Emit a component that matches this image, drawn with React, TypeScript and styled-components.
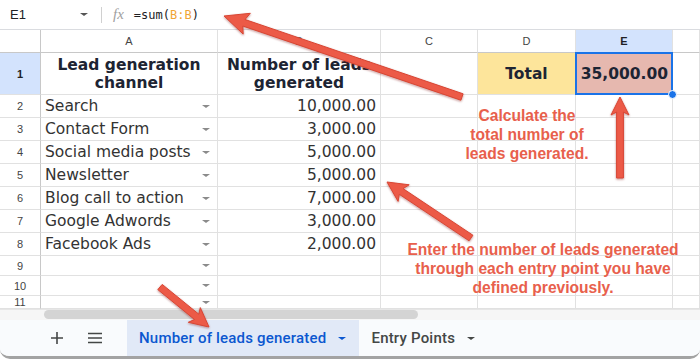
import React from "react";
import styled, { createGlobalStyle } from "styled-components";

const Global = createGlobalStyle`
  html, body { margin: 0; padding: 0; background: #fff; }
  * { box-sizing: border-box; }
`;

const Frame = styled.div`
  position: relative;
  width: 700px;
  height: 359px;
  overflow: hidden;
  background: #fff;
  font-family: "Liberation Sans", Arial, sans-serif;
  display: flex;
  flex-direction: column;
  border-bottom: 3px solid #a3a3a3;
  border-radius: 0 0 10px 10px;
`;

const FormulaBar = styled.div`
  height: 30px;
  flex: none;
  display: flex;
  align-items: center;
  border-bottom: 1px solid #dadce0;
  padding-left: 10px;
  color: #202124;
`;

const NameBox = styled.div`
  width: 80px;
  display: flex;
  align-items: center;
  justify-content: space-between;
  font-size: 13px;
  padding-right: 2px;
`;

const Caret = styled.span<{ $color?: string; $size?: number }>`
  display: inline-block;
  width: 0;
  height: 0;
  flex: none;
  border-left: ${(p) => p.$size ?? 4}px solid transparent;
  border-right: ${(p) => p.$size ?? 4}px solid transparent;
  border-top: ${(p) => (p.$size ?? 4) * 0.9}px solid ${(p) => p.$color ?? "#757575"};
`;

const Separator = styled.div`
  width: 1px;
  height: 16px;
  background: #d0d0d0;
  margin: 0 11px 0 11px;
`;

const Fx = styled.span`
  font-family: "Liberation Serif", serif;
  font-style: italic;
  font-size: 15px;
  color: #a0a0a0;
  margin-right: 10px;
`;

const Formula = styled.span`
  font-family: "DejaVu Sans Mono", "Liberation Mono", monospace;
  font-size: 12px;
  color: #202124;
`;

const Ref = styled.span`
  color: #f0a534;
`;

const Sheet = styled.div`
  flex: none;
  display: grid;
  grid-template-columns: 41px 177px 163px 97px 98px 97px 27px;
  grid-template-rows: 23px 42px repeat(7, 23px) 20px 20px 13px;
  overflow: hidden;
  height: 279px;
`;

const GridBox = styled.div`
  border-right: 1px solid #e1e1e1;
  border-bottom: 1px solid #e1e1e1;
  min-width: 0;
  overflow: hidden;
`;

const Corner = styled(GridBox)`
  border-right-color: #c8c8c8;
  border-bottom-color: #c8c8c8;
`;

const ColHeader = styled(GridBox)<{ $active?: boolean }>`
  display: flex;
  align-items: center;
  justify-content: center;
  font-size: 11px;
  color: ${(p) => (p.$active ? "#202124" : "#444")};
  font-weight: ${(p) => (p.$active ? 700 : 400)};
  background: ${(p) => (p.$active ? "#d3e3fd" : "#fff")};
  border-bottom-color: #c8c8c8;
`;

const RowHeader = styled(GridBox)<{ $active?: boolean }>`
  display: flex;
  align-items: center;
  justify-content: center;
  font-size: 11px;
  color: ${(p) => (p.$active ? "#202124" : "#444")};
  font-weight: ${(p) => (p.$active ? 700 : 400)};
  background: ${(p) => (p.$active ? "#d3e3fd" : "#fff")};
  border-right-color: #c8c8c8;
`;

const Cell = styled(GridBox)<{ $align?: "left" | "right" | "center"; $bg?: string }>`
  display: flex;
  align-items: flex-end;
  justify-content: ${(p) =>
    p.$align === "right" ? "flex-end" : p.$align === "center" ? "center" : "space-between"};
  padding: 0 4px 2px 4px;
  font-family: "DejaVu Sans", Verdana, sans-serif;
  font-size: 15.5px;
  color: #333;
  white-space: nowrap;
  background: ${(p) => p.$bg ?? "transparent"};
`;

const ChoiceCell = styled(Cell)`
  padding-right: 7px;
  align-items: center;
  padding-bottom: 0;
`;

const TitleCell = styled(GridBox)<{ $bg?: string }>`
  display: flex;
  align-items: center;
  justify-content: center;
  text-align: center;
  font-family: "DejaVu Sans", Verdana, sans-serif;
  font-weight: 700;
  font-size: 15.5px;
  line-height: 18px;
  color: #1d2433;
  background: ${(p) => p.$bg ?? "transparent"};
  padding: 0 4px;
`;

const Selected = styled(TitleCell)`
  position: relative;
  overflow: visible;
  border: 2px solid #1a73e8;
  margin: -1px 0 0 -1px;
  justify-content: flex-end;
  padding-right: 3px;
`;

const Handle = styled.span`
  position: absolute;
  right: -6px;
  bottom: -6px;
  width: 9px;
  height: 9px;
  border-radius: 50%;
  background: #1a73e8;
  border: 1px solid #fff;
`;

const ScrollRow = styled.div`
  flex: none;
  height: 11px;
  display: flex;
  background: #f6f6f6;
  border-top: 1px solid #e6e6e6;
`;

const Thumb = styled.div`
  margin-left: 44px;
  width: 374px;
  height: 9px;
  border-radius: 5px;
  background: #d4d4d4;
`;

const TabBar = styled.div`
  flex: 1;
  display: flex;
  align-items: stretch;
  background: #f9fbfd;
  padding-left: 38px;
`;

const IconButton = styled.div`
  width: 38px;
  display: flex;
  align-items: center;
  justify-content: center;
  color: #444746;
`;

const Tab = styled.div<{ $active?: boolean }>`
  display: flex;
  align-items: center;
  gap: 12px;
  padding: 0 13px 0 12px;
  margin-left: ${(p) => (p.$active ? "13px" : "0")};
  font-family: Roboto, "Noto Sans", sans-serif;
  font-size: 15px;
  font-weight: 500;
  letter-spacing: 0.2px;
  color: ${(p) => (p.$active ? "#0b57d0" : "#444746")};
  background: ${(p) => (p.$active ? "#e1e9f7" : "transparent")};
`;

const Overlay = styled.svg`
  position: absolute;
  left: 0;
  top: 0;
  width: 700px;
  height: 359px;
  pointer-events: none;
`;

const Note = styled.div<{ $x: number; $y: number; $w: number }>`
  position: absolute;
  left: ${(p) => p.$x}px;
  top: ${(p) => p.$y}px;
  width: ${(p) => p.$w}px;
  text-align: center;
  font-family: "Liberation Sans", Arial, sans-serif;
  font-weight: 700;
  font-size: 15.6px;
  line-height: 19px;
  color: #e8604c;
`;

type ArrowDef = { x1: number; y1: number; x2: number; y2: number; hl?: number; hw?: number };

function arrowPoints({ x1, y1, x2, y2, hl = 18, hw = 18 }: ArrowDef) {
  const dx = x2 - x1;
  const dy = y2 - y1;
  const len = Math.hypot(dx, dy);
  const ux = dx / len;
  const uy = dy / len;
  const nx = -uy;
  const ny = ux;
  const sw = 3.4;
  const bx = x2 - ux * hl;
  const by = y2 - uy * hl;
  const nb = bx + ux * 3;
  const nby = by + uy * 3;
  const pts = [
    [x1 + nx * sw, y1 + ny * sw],
    [nb + nx * sw, nby + ny * sw],
    [bx + nx * (hw / 2), by + ny * (hw / 2)],
    [x2, y2],
    [bx - nx * (hw / 2), by - ny * (hw / 2)],
    [nb - nx * sw, nby - ny * sw],
    [x1 - nx * sw, y1 - ny * sw],
  ];
  return pts.map((p) => `${p[0].toFixed(1)},${p[1].toFixed(1)}`).join(" ");
}

const arrows: ArrowDef[] = [
  { x1: 462, y1: 97, x2: 224, y2: 16, hl: 24, hw: 22 },
  { x1: 620, y1: 178, x2: 620, y2: 97, hl: 18, hw: 18 },
  { x1: 471, y1: 238, x2: 387, y2: 182, hl: 20, hw: 20 },
  { x1: 160, y1: 287, x2: 209, y2: 327, hl: 19, hw: 19 },
];

const rows: [string, string][] = [
  ["Search", "10,000.00"],
  ["Contact Form", "3,000.00"],
  ["Social media posts", "5,000.00"],
  ["Newsletter", "5,000.00"],
  ["Blog call to action", "7,000.00"],
  ["Google Adwords", "3,000.00"],
  ["Facebook Ads", "2,000.00"],
  ["", ""],
  ["", ""],
  ["", ""],
];

const cols = ["A", "B", "C", "D", "E", ""];

export default function App() {
  return (
    <>
      <Global />
      <Frame>
        <FormulaBar>
          <NameBox>
            E1
            <Caret $color="#555" />
          </NameBox>
          <Separator />
          <Fx>fx</Fx>
          <Formula>
            =sum(<Ref>B:B</Ref>)
          </Formula>
        </FormulaBar>

        <Sheet>
          <Corner />
          {cols.map((c, i) => (
            <ColHeader key={i} $active={c === "E"}>
              {c}
            </ColHeader>
          ))}

          <RowHeader $active>1</RowHeader>
          <TitleCell>
            Lead generation
            <br />
            channel
          </TitleCell>
          <TitleCell>
            Number of leads
            <br />
            generated
          </TitleCell>
          <GridBox />
          <TitleCell $bg="#fde59b">Total</TitleCell>
          <Selected $bg="#e6b8af">
            35,000.00
            <Handle />
          </Selected>
          <GridBox />

          {rows.map(([name, value], i) => (
            <React.Fragment key={i}>
              <RowHeader>{i + 2}</RowHeader>
              <ChoiceCell>
                <span>{name}</span>
                <Caret $color="#8a8a8a" $size={4} />
              </ChoiceCell>
              <Cell $align="right">{value}</Cell>
              <GridBox />
              <GridBox />
              <GridBox />
              <GridBox />
            </React.Fragment>
          ))}
        </Sheet>

        <ScrollRow>
          <Thumb />
        </ScrollRow>

        <TabBar>
          <IconButton>
            <svg width="14" height="14" viewBox="0 0 14 14">
              <path d="M7 1v12M1 7h12" stroke="#444746" strokeWidth="1.6" />
            </svg>
          </IconButton>
          <IconButton>
            <svg width="16" height="12" viewBox="0 0 16 12">
              <path d="M1 1.5h14M1 6h14M1 10.5h14" stroke="#444746" strokeWidth="1.6" />
            </svg>
          </IconButton>
          <Tab $active>
            Number of leads generated
            <Caret $color="#0b57d0" />
          </Tab>
          <Tab>
            Entry Points
            <Caret $color="#444746" />
          </Tab>
        </TabBar>

        <Overlay viewBox="0 0 700 359">
          <defs>
            <filter id="sh" x="-20%" y="-20%" width="140%" height="140%">
              <feDropShadow dx="0" dy="1" stdDeviation="1" floodColor="#7a1d12" floodOpacity="0.45" />
            </filter>
          </defs>
          {arrows.map((a, i) => (
            <polygon
              key={i}
              points={arrowPoints(a)}
              fill="#ec5a47"
              stroke="#d84634"
              strokeWidth="1"
              strokeLinejoin="round"
              filter="url(#sh)"
            />
          ))}
        </Overlay>

        <Note $x={452} $y={106} $w={150}>
          Calculate the
          <br />
          total number of
          <br />
          leads generated.
        </Note>
        <Note $x={390} $y={240} $w={306}>
          Enter the number of leads generated
          <br />
          through each entry point you have
          <br />
          defined previously.
        </Note>
      </Frame>
    </>
  );
}
